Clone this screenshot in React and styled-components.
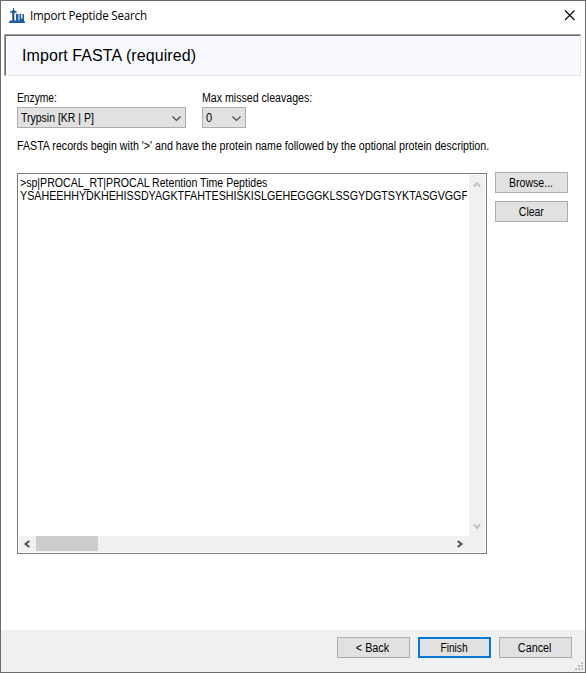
import React from "react";
import styled, { createGlobalStyle } from "styled-components";

const Global = createGlobalStyle`
  * { box-sizing: border-box; }
  body { margin: 0; background: #fff; }
`;

const Window = styled.main`
  width: 586px;
  height: 673px;
  display: flex;
  flex-direction: column;
  border: 1px solid #6b6b6b;
  background: #fff;
  color: #000;
  font: 12px/13px "Liberation Sans", Arial, sans-serif;
  overflow: hidden;
`;

const TitleBar = styled.header`
  height: 33px;
  flex: none;
  display: flex;
  align-items: flex-start;
  padding: 7px 10px 0 8px;
`;

const Title = styled.h1`
  flex: 1;
  margin: 0 0 0 5px;
  font: 400 12px/16px "Open Sans", sans-serif;
  letter-spacing: -0.2px;
  white-space: nowrap;
  transform: scaleX(0.966);
  transform-origin: 0 0;
`;

const CloseButton = styled.button`
  width: 11px;
  height: 11px;
  margin-top: 2px;
  padding: 0;
  border: 0;
  background: none;
  display: flex;
`;

const Banner = styled.section`
  height: 42px;
  flex: none;
  margin: 0 4px 0 3px;
  border: 1px solid;
  border-color: #a0a0a0 #e3e3e3 #e3e3e3 #a0a0a0;
`;

const BannerInner = styled.div`
  height: 100%;
  border-top: 1px solid #696969;
  border-left: 1px solid #696969;
  background: #f7f9ff;
  padding: 11px 0 0 16px;
`;

const BannerText = styled.h2`
  margin: 0;
  font: 400 16px/18px "Liberation Sans", Arial, sans-serif;
  letter-spacing: 0.08px;
  white-space: nowrap;
`;

const Body = styled.section`
  flex: 1;
  padding: 16px 0 0 16px;
`;

const Fields = styled.div`
  display: flex;
  gap: 16px;
`;

const Field = styled.div`
  width: ${(p) => p.$width}px;
`;

/* Condensed interface lettering; $scale is the horizontal squeeze. */
const Text = styled.span`
  display: block;
  width: max-content;
  white-space: pre;
  transform: scaleX(${(p) => p.$scale || 0.88});
  transform-origin: ${(p) => (p.$centered ? "50%" : "0")} 0;
`;

const Combo = styled.div`
  height: 21px;
  margin-top: 2px;
  padding: 1px 4px 0 3px;
  display: flex;
  align-items: center;
  justify-content: space-between;
  border: 1px solid #adadad;
  background: #e1e1e1;
`;

const Hint = styled.div`
  margin-top: 12px;
`;

const Editor = styled.div`
  display: flex;
  align-items: flex-start;
  gap: 8px;
  margin-top: 19px;
`;

const Memo = styled.div`
  width: 470px;
  height: 381px;
  margin-top: 1px;
  padding: 1px;
  display: grid;
  grid-template: 361px 16px / 450px 16px;
  border: 1px solid #7a7a7a;
`;

const MemoText = styled.div`
  padding: 2px 0 0 1px;
  width: 448px;
  overflow: hidden;
`;

const VerticalBar = styled.div`
  display: flex;
  flex-direction: column;
  align-items: center;
  justify-content: space-between;
  padding: 6px 0;
  background: #f0f0f0;
`;

const HorizontalBar = styled.div`
  grid-column: 1 / 3;
  display: flex;
  align-items: center;
  padding-left: 4px;
  background: #f0f0f0;
`;

const Thumb = styled.div`
  width: 62px;
  height: 15px;
  margin: 0 358px 1px 5px;
  background: #cdcdcd;
`;

const ButtonColumn = styled.div`
  display: flex;
  flex-direction: column;
  gap: 8px;
`;

const ButtonFrame = styled.button`
  width: 73px;
  height: 21px;
  padding: 2px 1px 0 0;
  display: flex;
  align-items: center;
  justify-content: center;
  border: ${(p) => (p.$primary ? "2px solid #0078d7" : "1px solid #adadad")};
  border-radius: 0;
  background: #e1e1e1;
  color: #000;
  font: inherit;
`;

const Footer = styled.footer`
  height: 42px;
  flex: none;
  display: flex;
  gap: 8px;
  padding: 7px 0 0 336px;
  background: #f0f0f0;
`;

const Grip = styled.svg`
  align-self: flex-end;
  margin: 0 0 2px -5px;
`;

const ArrowIcon = styled.svg`
  flex: none;
`;

const AppIcon = () => (
  <svg width="16" height="16" viewBox="0 0 16 16" fill="#1f5aa0">
    <path d="M4 0h1v2l3 2v.8H5.4V13H3.2V4.8H1V4l3-2z" />
    <path d="M7 6h2.5v7H7z" />
    <path d="M10.5 6h1.7v4.5h1.3V6h1.5v7h-4.5z" />
    <path d="M1 12.5h14v1h1V15H0v-1.5h1z" />
  </svg>
);

const Chevron = () => (
  <svg width="9" height="5" viewBox="0 0 9 5" fill="none" stroke="#444" strokeWidth="1.1">
    <path d="M.5.5l4 4 4-4" />
  </svg>
);

const ARROWS = {
  up: "M1 5.5l3-3.5 3 3.5",
  down: "M1 1.5l3 3.5 3-3.5",
  left: "M6.3 1L2.5 4l3.8 3",
  right: "M1.7 1l3.8 3-3.8 3",
};

const Arrow = ({ dir, color = "#505050" }) => {
  const upright = dir === "up" || dir === "down";
  return (
    <ArrowIcon width="8" height={upright ? 7 : 8} fill="none" stroke={color} strokeWidth="2">
      <path d={ARROWS[dir]} />
    </ArrowIcon>
  );
};

const Button = ({ children, scale, primary }) => (
  <ButtonFrame $primary={primary}>
    <Text $centered $scale={scale}>{children}</Text>
  </ButtonFrame>
);

export default function App() {
  return (
    <>
      <Global />
      <Window>
        <TitleBar>
          <AppIcon />
          <Title>Import Peptide Search</Title>
          <CloseButton aria-label="Close">
            <svg width="11" height="11" stroke="#000" strokeWidth="1.1">
              <path d="M1 .5l9.5 9.5M10.5.5L1 10" />
            </svg>
          </CloseButton>
        </TitleBar>
        <Banner>
          <BannerInner>
            <BannerText>Import FASTA (required)</BannerText>
          </BannerInner>
        </Banner>
        <Body>
          <Fields>
            <Field $width={169}>
              <Text $scale={0.855}>Enzyme:</Text>
              <Combo>
                <Text $scale={0.875}>Trypsin [KR | P]</Text>
                <Chevron />
              </Combo>
            </Field>
            <Field $width={44}>
              <Text $scale={0.884}>Max missed cleavages:</Text>
              <Combo>
                <Text $scale={0.92}>0</Text>
                <Chevron />
              </Combo>
            </Field>
          </Fields>
          <Hint>
            <Text $scale={0.888}>
              FASTA records begin with '&gt;' and have the protein name followed by the optional protein description.
            </Text>
          </Hint>
          <Editor>
            <Memo>
              <MemoText>
                <Text $scale={0.881}>&gt;sp|PROCAL_RT|PROCAL Retention Time Peptides</Text>
                <Text $scale={0.893}>YSAHEEHHYDKHEHISSDYAGKTFAHTESHISKISLGEHEGGGKLSSGYDGTSYKTASGVGGFS</Text>
              </MemoText>
              <VerticalBar>
                <Arrow dir="up" color="#bfbfbf" />
                <Arrow dir="down" color="#bfbfbf" />
              </VerticalBar>
              <HorizontalBar>
                <Arrow dir="left" />
                <Thumb />
                <Arrow dir="right" />
              </HorizontalBar>
            </Memo>
            <ButtonColumn>
              <Button scale={0.88}>Browse...</Button>
              <Button scale={0.87}>Clear</Button>
            </ButtonColumn>
          </Editor>
        </Body>
        <Footer>
          <Button scale={0.9}>&lt; Back</Button>
          <Button primary scale={0.85}>Finish</Button>
          <Button scale={0.9}>Cancel</Button>
          <Grip width="8" height="8" fill="#bfbfbf">
            <path d="M6 0h2v2H6zM3 3h2v2H3zM6 3h2v2H6zM0 6h2v2H0zM3 6h2v2H3zM6 6h2v2H6z" />
          </Grip>
        </Footer>
      </Window>
    </>
  );
}
